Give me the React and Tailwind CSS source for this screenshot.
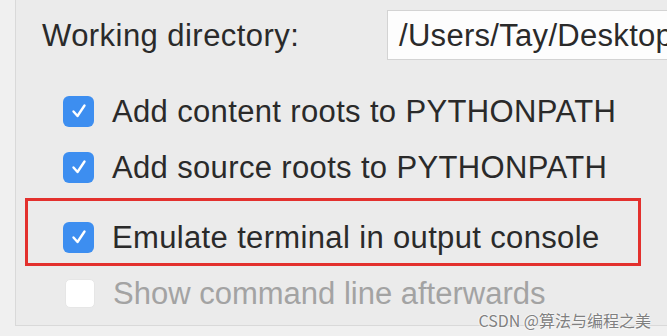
import React from "react";

const font = { fontFamily: '"Liberation Sans", Arial, sans-serif' };

function Check({ checked }) {
  if (!checked) {
    return <div className="w-[30px] h-[29px] rounded-[5px] bg-white border border-[#e6e6e6] shrink-0" />;
  }
  return (
    <div className="w-[31px] h-[31px] rounded-[6px] bg-[#3d8ef0] flex items-center justify-center shrink-0">
      <svg width="20" height="20" viewBox="0 0 20 20">
        <path d="M4.5 10.5 L8.5 15 L15.5 4.5" fill="none" stroke="white" strokeWidth="2.4" strokeLinecap="round" strokeLinejoin="round" />
      </svg>
    </div>
  );
}

function Row({ checked = true, disabled = false, children, className = "" }) {
  return (
    <div className={"flex items-center " + className}>
      <Check checked={checked} />
      <span className={"ml-[18px] text-[31px] leading-none whitespace-nowrap " + (disabled ? "text-[#a3a3a3] tracking-[0px]" : "text-[#2a2a2a] tracking-[0.35px]")}>
        {children}
      </span>
    </div>
  );
}

export default function App() {
  return (
    <div className="relative w-[667px] h-[336px] bg-[#f0f0f0] overflow-hidden" style={font}>
      <div className="ml-[15px] h-[326px] border-l border-b border-[#d9d9d9] bg-[#ebebeb] pt-[10px]">
        <div className="flex items-center h-[50px]">
          <span className="ml-[26px] w-[345px] shrink-0 text-[31px] tracking-[0.45px] leading-none text-[#2a2a2a] whitespace-nowrap">Working directory:</span>
          <div className="h-[50px] w-[320px] shrink-0 bg-[#fdfdfd] border border-[#d3d3d3] flex items-center pl-[11px]">
            <span className="text-[31px] tracking-[0.3px] leading-none text-[#2a2a2a] whitespace-nowrap">/Users/Tay/Desktop</span>
          </div>
        </div>
        <div className="mt-[23px] pl-[47px]">
          <Row className="h-[56px]">Add content roots to PYTHONPATH</Row>
          <Row className="h-[56px]">Add source roots to PYTHONPATH</Row>
        </div>
        <div className="ml-[9px] mt-[3px] w-[616px] h-[68px] border-[3px] border-[#e3302d] pl-[35px] pt-[10px] flex items-center">
          <Row>Emulate terminal in output console</Row>
        </div>
        <div className="pl-[49px] h-[54px] flex items-center">
          <Row checked={false} disabled>
            Show command line afterwards
          </Row>
        </div>
      </div>
      <div
        className="absolute right-[16px] bottom-[8px] text-[16px] leading-none text-[#808080] whitespace-nowrap"
        style={{ fontFamily: '"Noto Sans CJK SC", "Liberation Sans", sans-serif', textShadow: "0 0 2px #fff, 0 0 2px #fff" }}
      >
        CSDN @算法与编程之美
      </div>
    </div>
  );
}
